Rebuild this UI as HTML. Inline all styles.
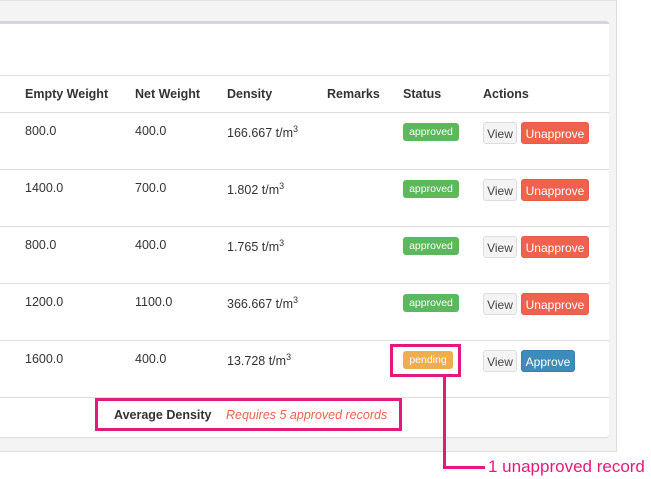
<!DOCTYPE html>
<html><head><style>
body{margin:0;width:651px;height:479px;background:#fff;font-family:"Liberation Sans",sans-serif;position:relative;overflow:hidden}
.outer{position:absolute;left:0;top:0;width:616px;height:450px;background:#f4f4f4;border-right:1px solid #ddd;border-top:1px solid #e4e4e4;border-bottom:1px solid #ddd}
.panel{position:absolute;left:0;top:21px;width:609px;height:413px;background:#fff;border-top:3px solid #d2d6de;border-radius:0 3px 3px 0;box-shadow:0 1px 1px rgba(0,0,0,.1)}
.ln{position:absolute;left:0;width:609px;height:1px;background:#ddd}
.t{position:absolute;font-size:12.5px;color:#333;white-space:nowrap}
.h{font-weight:bold}
sup{font-size:9px}
.badge{position:absolute;height:18px;border-radius:3px;color:#fff;font-size:10.5px;text-align:center;line-height:18px}
.btn{position:absolute;height:22px;border-radius:3px;font-size:12px;text-align:center;line-height:22px;box-sizing:border-box}
.v{background:#f4f4f4;border:1px solid #ddd;color:#444;width:34px}
.u{background:#f0624d;border:1px solid #e85a45;color:#fff;width:68px}
.a{background:#3c8dbc;border:1px solid #367fa9;color:#fff;width:54px}
.pink{position:absolute;border:3px solid #e5197d;box-sizing:border-box}
</style></head><body>
<div class="outer"></div>
<div class="panel"></div>
<div class="ln" style="top:75px"></div>
<div class="ln" style="top:112px"></div>
<div class="ln" style="top:169px"></div>
<div class="ln" style="top:226px"></div>
<div class="ln" style="top:283px"></div>
<div class="ln" style="top:340px"></div>
<div class="ln" style="top:397px"></div>
<div class="t h" style="left:25px;top:87px">Empty Weight</div>
<div class="t h" style="left:135px;top:87px">Net Weight</div>
<div class="t h" style="left:227px;top:87px">Density</div>
<div class="t h" style="left:327px;top:87px">Remarks</div>
<div class="t h" style="left:403px;top:87px">Status</div>
<div class="t h" style="left:483px;top:87px">Actions</div>

<div class="t" style="left:25px;top:124px">800.0</div><div class="t" style="left:135px;top:124px">400.0</div><div class="t" style="left:227px;top:124px">166.667 t/m<sup>3</sup></div>
<div class="badge" style="left:403px;top:123px;width:56px;background:#5cb85c">approved</div>
<div class="btn v" style="left:483px;top:122px">View</div><div class="btn u" style="left:521px;top:122px">Unapprove</div>

<div class="t" style="left:25px;top:181px">1400.0</div><div class="t" style="left:135px;top:181px">700.0</div><div class="t" style="left:227px;top:181px">1.802 t/m<sup>3</sup></div>
<div class="badge" style="left:403px;top:180px;width:56px;background:#5cb85c">approved</div>
<div class="btn v" style="left:483px;top:179px">View</div><div class="btn u" style="left:521px;top:179px">Unapprove</div>

<div class="t" style="left:25px;top:238px">800.0</div><div class="t" style="left:135px;top:238px">400.0</div><div class="t" style="left:227px;top:238px">1.765 t/m<sup>3</sup></div>
<div class="badge" style="left:403px;top:237px;width:56px;background:#5cb85c">approved</div>
<div class="btn v" style="left:483px;top:236px">View</div><div class="btn u" style="left:521px;top:236px">Unapprove</div>

<div class="t" style="left:25px;top:295px">1200.0</div><div class="t" style="left:135px;top:295px">1100.0</div><div class="t" style="left:227px;top:295px">366.667 t/m<sup>3</sup></div>
<div class="badge" style="left:403px;top:294px;width:56px;background:#5cb85c">approved</div>
<div class="btn v" style="left:483px;top:293px">View</div><div class="btn u" style="left:521px;top:293px">Unapprove</div>

<div class="t" style="left:25px;top:352px">1600.0</div><div class="t" style="left:135px;top:352px">400.0</div><div class="t" style="left:227px;top:352px">13.728 t/m<sup>3</sup></div>
<div class="badge" style="left:403px;top:351px;width:50px;background:#f0ad4e">pending</div>
<div class="btn v" style="left:483px;top:350px">View</div><div class="btn a" style="left:521px;top:350px">Approve</div>

<div class="t h" style="left:114px;top:408px">Average Density</div>
<div class="t" style="left:226px;top:408px;color:#f0624d;font-style:italic">Requires 5 approved records</div>
<div class="pink" style="left:95px;top:398px;width:307px;height:33px"></div>
<div class="pink" style="left:390px;top:344px;width:71px;height:33px"></div>
<div style="position:absolute;left:443px;top:376px;width:3px;height:93px;background:#e5197d"></div>
<div style="position:absolute;left:443px;top:466px;width:42px;height:3px;background:#e5197d"></div>
<div style="position:absolute;left:488px;top:457px;font-size:17px;color:#e5197d;white-space:nowrap">1 unapproved record</div>
</body></html>
